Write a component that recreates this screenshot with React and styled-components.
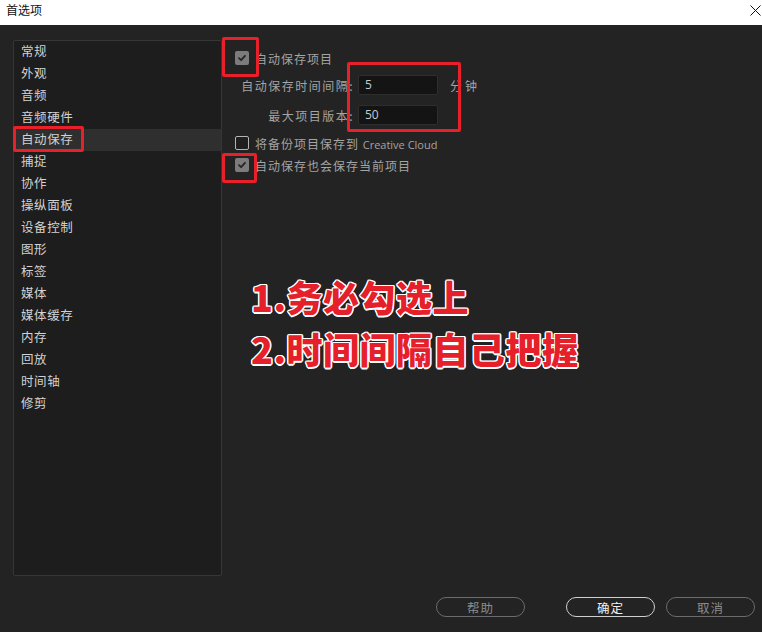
import styled, { createGlobalStyle } from "styled-components";

const GlobalStyle = createGlobalStyle`
  html, body {
    margin: 0;
    padding: 0;
    background: #232323;
  }
  body {
    font-family: "Noto Sans CJK SC", "Noto Sans", sans-serif;
  }
`;

const categories = [
  "常规",
  "外观",
  "音频",
  "音频硬件",
  "自动保存",
  "捕捉",
  "协作",
  "操纵面板",
  "设备控制",
  "图形",
  "标签",
  "媒体",
  "媒体缓存",
  "内存",
  "回放",
  "时间轴",
  "修剪",
];

const CheckIcon = () => (
  <svg width="10" height="10" viewBox="0 0 10 10">
    <path
      d="M2 5.2 L4.1 7.2 L8 2.8"
      fill="none"
      stroke="#262626"
      strokeWidth="1.8"
      strokeLinecap="round"
      strokeLinejoin="round"
    />
  </svg>
);

const CloseIcon = () => (
  <svg width="11" height="11" viewBox="0 0 11 11">
    <path d="M0.5 0.5 L10.5 10.5 M10.5 0.5 L0.5 10.5" stroke="#111" strokeWidth="1" />
  </svg>
);

const Preferences = () => {
  return (
    <Window>
      <TitleBar>
        <Title>首选项</Title>
        <CloseButton>
          <CloseIcon />
        </CloseButton>
      </TitleBar>
      <Body>
        <Main>
          <Sidebar>
            {categories.map((name) => (
              <SidebarItem key={name} $active={name === "自动保存"}>
                {name}
              </SidebarItem>
            ))}
          </Sidebar>
          <Content>
            <CheckRow>
              <Checkbox $checked>
                <CheckIcon />
              </Checkbox>
              <Label>自动保存项目</Label>
            </CheckRow>
            <FieldGrid>
              <FieldLabel>自动保存时间间隔:</FieldLabel>
              <Input>5</Input>
              <Unit>分钟</Unit>
              <FieldLabel>最大项目版本:</FieldLabel>
              <Input>50</Input>
              <span />
            </FieldGrid>
            <CheckRow $top={7}>
              <Checkbox />
              <Label>
                将备份项目保存到 <Latin>Creative Cloud</Latin>
              </Label>
            </CheckRow>
            <CheckRow>
              <Checkbox $checked>
                <CheckIcon />
              </Checkbox>
              <Label>自动保存也会保存当前项目</Label>
            </CheckRow>
            <Note>
              <NoteLine>1.务必勾选上</NoteLine>
              <NoteLine>2.时间间隔自己把握</NoteLine>
            </Note>
          </Content>
        </Main>
        <Footer>
          <Button>帮助</Button>
          <Button $primary>确定</Button>
          <Button>取消</Button>
        </Footer>
      </Body>
      <Mark $x={13} $y={126} $w={71} $h={26} />
      <Mark $x={222} $y={37} $w={37} $h={40} />
      <Mark $x={347} $y={62} $w={114} $h={70} />
      <Mark $x={222} $y={153} $w={35} $h={30} />
    </Window>
  );
};

const Window = styled.div`
  position: relative;
  width: 762px;
  height: 632px;
  display: flex;
  flex-direction: column;
  background: #232323;
  overflow: hidden;
`;

const TitleBar = styled.div`
  height: 25px;
  flex-shrink: 0;
  background: #ffffff;
  display: flex;
  align-items: center;
  justify-content: space-between;
  padding: 0 1px 6px 6px;
  box-sizing: border-box;
`;

const Title = styled.span`
  font-size: 12px;
  color: #111;
  line-height: 1;
`;

const CloseButton = styled.span`
  display: flex;
  margin-top: 2px;
`;

const Body = styled.div`
  flex: 1;
  display: flex;
  flex-direction: column;
  padding: 15px 7px 0 13px;
`;

const Main = styled.div`
  display: flex;
  height: 536px;
`;

const Sidebar = styled.div`
  width: 209px;
  box-sizing: border-box;
  background: #1d1d1d;
  border: 1px solid #363636;
  border-radius: 2px;
`;

const SidebarItem = styled.div`
  height: 22px;
  line-height: 20px;
  padding-left: 7px;
  font-size: 12.5px;
  letter-spacing: 0.6px;
  color: #d2d2d2;
  background: ${(p) => (p.$active ? "#2f2f2f" : "transparent")};
`;

const Content = styled.div`
  flex: 1;
  padding: 7px 0 0 13px;
  display: flex;
  flex-direction: column;
`;

const CheckRow = styled.div`
  display: flex;
  align-items: center;
  gap: 6px;
  height: 22px;
  margin-top: ${(p) => p.$top || 0}px;
`;

const Checkbox = styled.span`
  width: 14px;
  height: 14px;
  flex-shrink: 0;
  box-sizing: border-box;
  border-radius: 2px;
  display: flex;
  align-items: center;
  justify-content: center;
  background: ${(p) => (p.$checked ? "#7c7c7c" : "#1f1f1f")};
  border: ${(p) => (p.$checked ? "none" : "1.5px solid #b4b4b4")};
`;

const Label = styled.span`
  font-size: 12px;
  color: #a4a4a4;
  letter-spacing: 1px;
`;

const Latin = styled.span`
  font-family: "Open Sans", "Noto Sans", sans-serif;
  font-size: 11px;
  letter-spacing: 0;
`;

const FieldGrid = styled.div`
  display: grid;
  grid-template-columns: 119px 80px auto;
  column-gap: 4px;
  row-gap: 10px;
  align-items: center;
  margin-top: 6px;
`;

const FieldLabel = styled.span`
  font-size: 12px;
  color: #a4a4a4;
  text-align: right;
  letter-spacing: 1.5px;
  white-space: nowrap;
`;

const Input = styled.div`
  height: 20px;
  box-sizing: border-box;
  background: #141414;
  border: 1px solid #2e2e2e;
  border-radius: 2px;
  padding-left: 6px;
  font-family: "Open Sans", "Noto Sans", sans-serif;
  font-size: 12px;
  line-height: 18px;
  color: #c4ccd6;
`;

const Unit = styled.span`
  font-size: 12px;
  color: #a4a4a4;
  letter-spacing: 3px;
  margin-left: 8px;
`;

const Note = styled.div`
  margin: 94px 0 0 16px;
  display: flex;
  flex-direction: column;
`;

const NoteLine = styled.div`
  font-family: "Noto Sans CJK SC", sans-serif;
  font-weight: 900;
  font-size: 36px;
  line-height: 52px;
  letter-spacing: 0.5px;
  color: #e6202a;
  text-shadow:
    1.5px 0 0 #fff, -1.5px 0 0 #fff, 0 1.5px 0 #fff, 0 -1.5px 0 #fff,
    1px 1px 0 #fff, -1px -1px 0 #fff, 1px -1px 0 #fff, -1px 1px 0 #fff;
`;

const Footer = styled.div`
  display: flex;
  align-items: center;
  gap: 11px;
  margin-top: 21px;
  padding-left: 423px;
`;

const Button = styled.div`
  width: 89px;
  height: 20px;
  box-sizing: border-box;
  border-radius: 10px;
  border: 1.5px solid ${(p) => (p.$primary ? "#cfcfcf" : "#6c6c6c")};
  margin-left: ${(p) => (p.$primary ? "30px" : "0")};
  display: flex;
  align-items: center;
  justify-content: center;
  font-size: 12.5px;
  letter-spacing: 1px;
  color: ${(p) => (p.$primary ? "#f2f2f2" : "#8c8c8c")};
`;

const Mark = styled.div`
  position: absolute;
  left: ${(p) => p.$x}px;
  top: ${(p) => p.$y}px;
  width: ${(p) => p.$w}px;
  height: ${(p) => p.$h}px;
  box-sizing: border-box;
  border: 3px solid #e8202a;
  border-radius: 2px;
  pointer-events: none;
`;

export default function App() {
  return (
    <>
      <GlobalStyle />
      <Preferences />
    </>
  );
}
